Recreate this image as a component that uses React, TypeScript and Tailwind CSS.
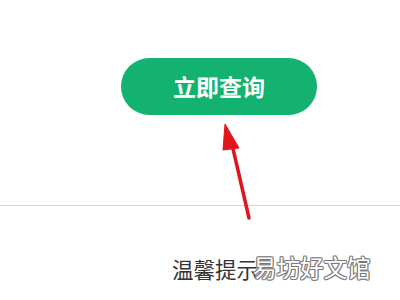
export default function App() {
  return (
    <div className="relative h-[300px] w-[400px] overflow-hidden bg-white font-['Noto_Sans_CJK_SC',sans-serif]">
      <div className="pl-[121px] pt-[58px]">
        <button
          type="button"
          className="flex h-[57px] w-[196px] items-center justify-center rounded-full bg-[#13b270] text-[23px] font-bold leading-none text-white"
        >
          立即查询
        </button>
      </div>

      <div className="mt-[90px] border-t border-[#d4d4d4]" />

      <div className="flex items-center pl-[172px] pt-[52px]">
        <span className="text-[21.5px] leading-none text-[#333]">温馨提示</span>
        <span className="-ml-[5px] -mt-[3px] text-[23.5px] leading-none text-white [text-shadow:1px_0_0_#777,-1px_0_0_#777,0_1px_0_#777,0_-1px_0_#777,1px_1px_0_#999,-1px_-1px_0_#999,1px_-1px_0_#999,-1px_1px_0_#999]">
          易坊好文馆
        </span>
      </div>

      {/* red arrow pointing at the button */}
      <svg className="absolute left-0 top-0" width="400" height="300" viewBox="0 0 400 300">
        <line x1="249" y1="218" x2="231" y2="140" stroke="#e0161e" strokeWidth="3.5" strokeLinecap="round" />
        <polygon points="225,124 239,148 223,150" fill="#e0161e" strokeLinejoin="round" stroke="#e0161e" strokeWidth="1" />
      </svg>
    </div>
  );
}
